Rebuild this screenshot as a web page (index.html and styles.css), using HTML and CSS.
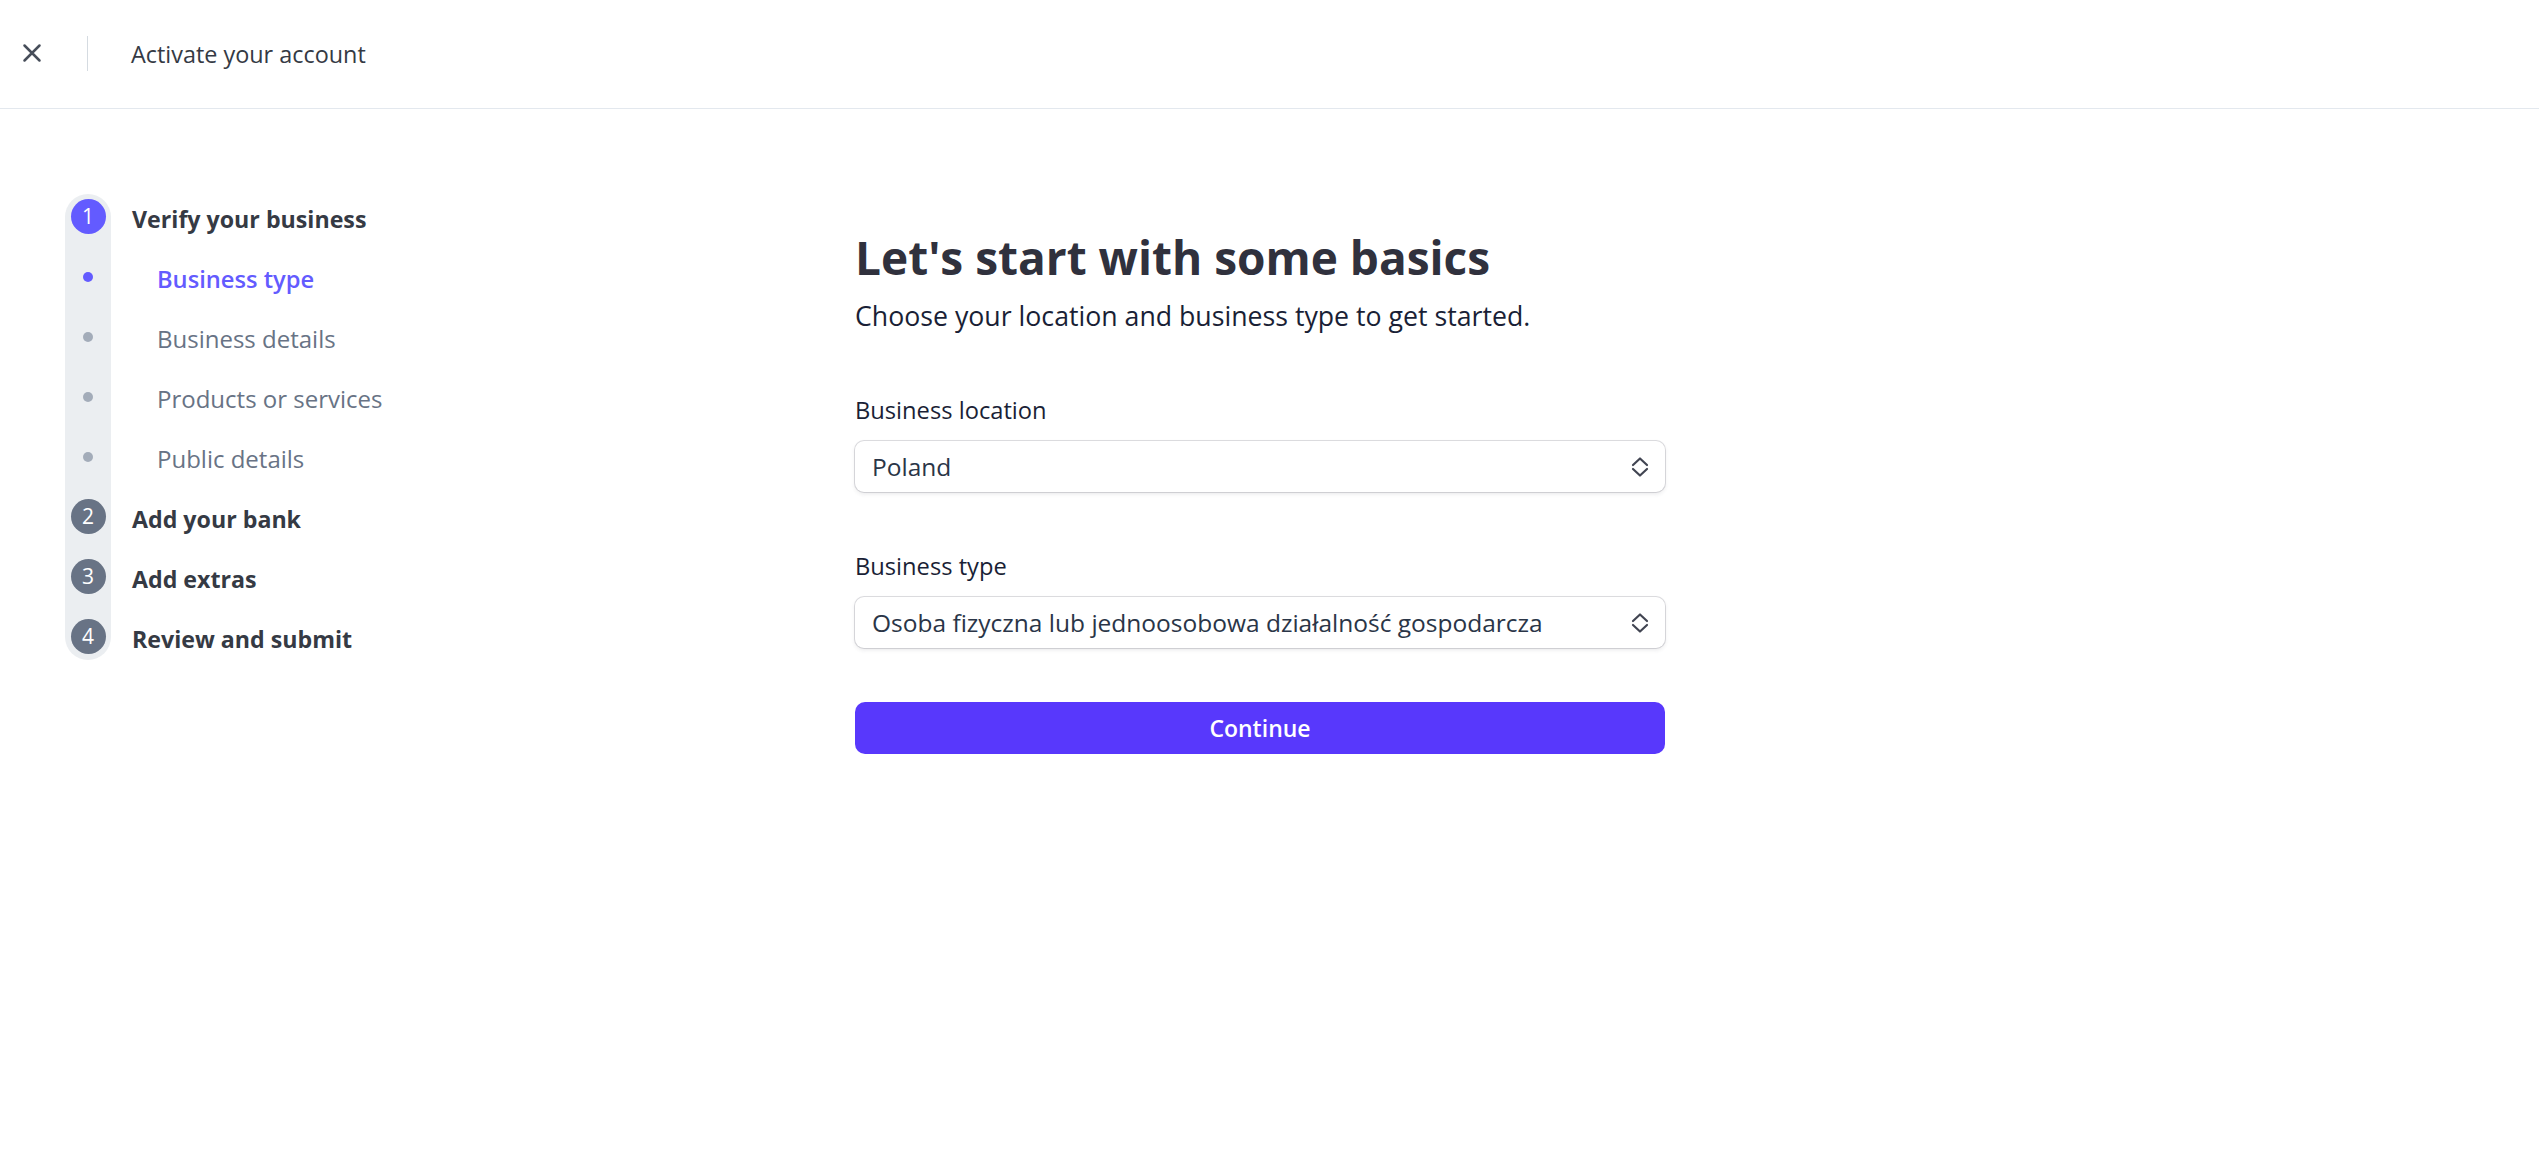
FILE: index.html
```html
<!DOCTYPE html>
<html lang="en">
<head>
<meta charset="utf-8">
<title>Activate your account</title>
<link rel="stylesheet" href="styles.css">
</head>
<body>
<header class="topbar">
  <button class="close" aria-label="Close">
    <svg width="20" height="20" viewBox="0 0 20 20"><path d="M2.5 2.5 L17.5 17.5 M17.5 2.5 L2.5 17.5" stroke="#474e5a" stroke-width="2.5" stroke-linecap="round" fill="none"/></svg>
  </button>
  <span class="divider"></span>
  <span class="topbar-title">Activate your account</span>
</header>

<div class="page">
  <nav class="steps">
    <div class="track">
      <span class="num num-active">1</span>
      <span class="dot-box"><span class="dot dot-active"></span></span>
      <span class="dot-box"><span class="dot"></span></span>
      <span class="dot-box"><span class="dot"></span></span>
      <span class="dot-box"><span class="dot"></span></span>
      <span class="num">2</span>
      <span class="num">3</span>
      <span class="num">4</span>
    </div>
    <ul class="labels">
      <li class="step">Verify your business</li>
      <li class="sub sub-active">Business type</li>
      <li class="sub">Business details</li>
      <li class="sub">Products or services</li>
      <li class="sub">Public details</li>
      <li class="step">Add your bank</li>
      <li class="step">Add extras</li>
      <li class="step">Review and submit</li>
    </ul>
  </nav>

  <main class="content">
    <h1 class="title">Let's start with some basics</h1>
    <p class="subtitle">Choose your location and business type to get started.</p>

    <div class="field field-first">
      <label class="label">Business location</label>
      <div class="select">
        <span class="select-value">Poland</span>
        <svg class="chev" width="18" height="22" viewBox="0 0 18 22"><path d="M2 9 L9 2.5 L16 9 M2 13 L9 19.5 L16 13" stroke="#414552" stroke-width="2.2" stroke-linecap="round" stroke-linejoin="round" fill="none"/></svg>
      </div>
    </div>

    <div class="field">
      <label class="label">Business type</label>
      <div class="select">
        <span class="select-value">Osoba fizyczna lub jednoosobowa działalność gospodarcza</span>
        <svg class="chev" width="18" height="22" viewBox="0 0 18 22"><path d="M2 9 L9 2.5 L16 9 M2 13 L9 19.5 L16 13" stroke="#414552" stroke-width="2.2" stroke-linecap="round" stroke-linejoin="round" fill="none"/></svg>
      </div>
    </div>

    <button class="continue">Continue</button>
  </main>
</div>
</body>
</html>
```

FILE: styles.css
```css
* { box-sizing: border-box; }
html, body { margin: 0; padding: 0; background: #ffffff; }
body {
  font-family: "Open Sans", "Noto Sans", "DejaVu Sans", sans-serif;
  font-size: 23px;
  color: #353a44;
}

.topbar {
  height: 109px;
  border-bottom: 1px solid #e3e8ee;
  display: flex;
  align-items: center;
  padding-left: 22px;
}
.close {
  border: 0;
  background: none;
  padding: 0;
  width: 20px;
  height: 20px;
  display: flex;
  margin-top: -2px;
}
.divider {
  width: 1px;
  height: 35px;
  background: #d5dbe1;
  margin-left: 45px;
  margin-top: -2px;
}
.topbar-title {
  margin-left: 43px;
  font-size: 23.4px;
  color: #353a44;
  line-height: 32px;
}

.page {
  display: flex;
}

.steps {
  width: 855px;
  padding-left: 65px;
  padding-top: 85px;
  display: flex;
  align-items: flex-start;
  gap: 21px;
}
.track {
  width: 46px;
  background: #ebeef1;
  border-radius: 23px;
  padding: 5px 0 6px;
  display: flex;
  flex-direction: column;
  align-items: center;
  gap: 25px;
}
.num {
  width: 35px;
  height: 35px;
  border-radius: 50%;
  background: #687385;
  color: #ffffff;
  font-size: 21px;
  display: flex;
  align-items: center;
  justify-content: center;
  line-height: 1;
}
.num-active { background: #635bff; }
.dot-box {
  width: 35px;
  height: 35px;
  display: flex;
  align-items: center;
  justify-content: center;
}
.dot {
  width: 10px;
  height: 10px;
  border-radius: 50%;
  background: #a3acb9;
}
.dot-active { background: #635bff; }

.labels {
  list-style: none;
  margin: 0;
  padding: 7px 0 0;
  display: flex;
  flex-direction: column;
  gap: 25px;
}
.labels li {
  height: 35px;
  display: flex;
  align-items: center;
  white-space: nowrap;
}
.step {
  font-weight: 700;
  color: #353a44;
  font-size: 23.2px;
}
.sub {
  padding-left: 25px;
  color: #687385;
  font-size: 24px;
}
.sub-active {
  color: #635bff;
  font-weight: 600;
  font-size: 23.7px;
}

.content {
  width: 810px;
  padding-top: 118px;
}
.title {
  margin: 0;
  font-size: 46px;
  line-height: 60px;
  font-weight: 700;
  color: #30313d;
}
.subtitle {
  margin: 13px 0 0;
  font-size: 26.7px;
  line-height: 32px;
  color: #1a1f36;
}
.field { margin-top: 58px; }
.field-first { margin-top: 62px; }
.label {
  display: block;
  font-size: 23.7px;
  line-height: 32px;
  font-weight: 500;
  color: #1a1f36;
}
.select {
  margin-top: 15px;
  height: 51px;
  border-radius: 9px;
  background: #ffffff;
  box-shadow: 0 0 0 1px rgba(64, 68, 82, 0.18), 0 2px 4px rgba(64, 68, 82, 0.12);
  display: flex;
  align-items: center;
  justify-content: space-between;
  padding: 0 16px 0 17px;
}
.select-value {
  font-size: 24.5px;
  font-weight: 500;
  color: #2a3547;
  white-space: nowrap;
}
.chev { flex: none; }
.continue {
  margin-top: 54px;
  width: 100%;
  height: 52px;
  border: 0;
  border-radius: 10px;
  background: #5838fc;
  color: #ffffff;
  font-family: inherit;
  font-size: 23px;
  font-weight: 600;
  display: block;
}
```
